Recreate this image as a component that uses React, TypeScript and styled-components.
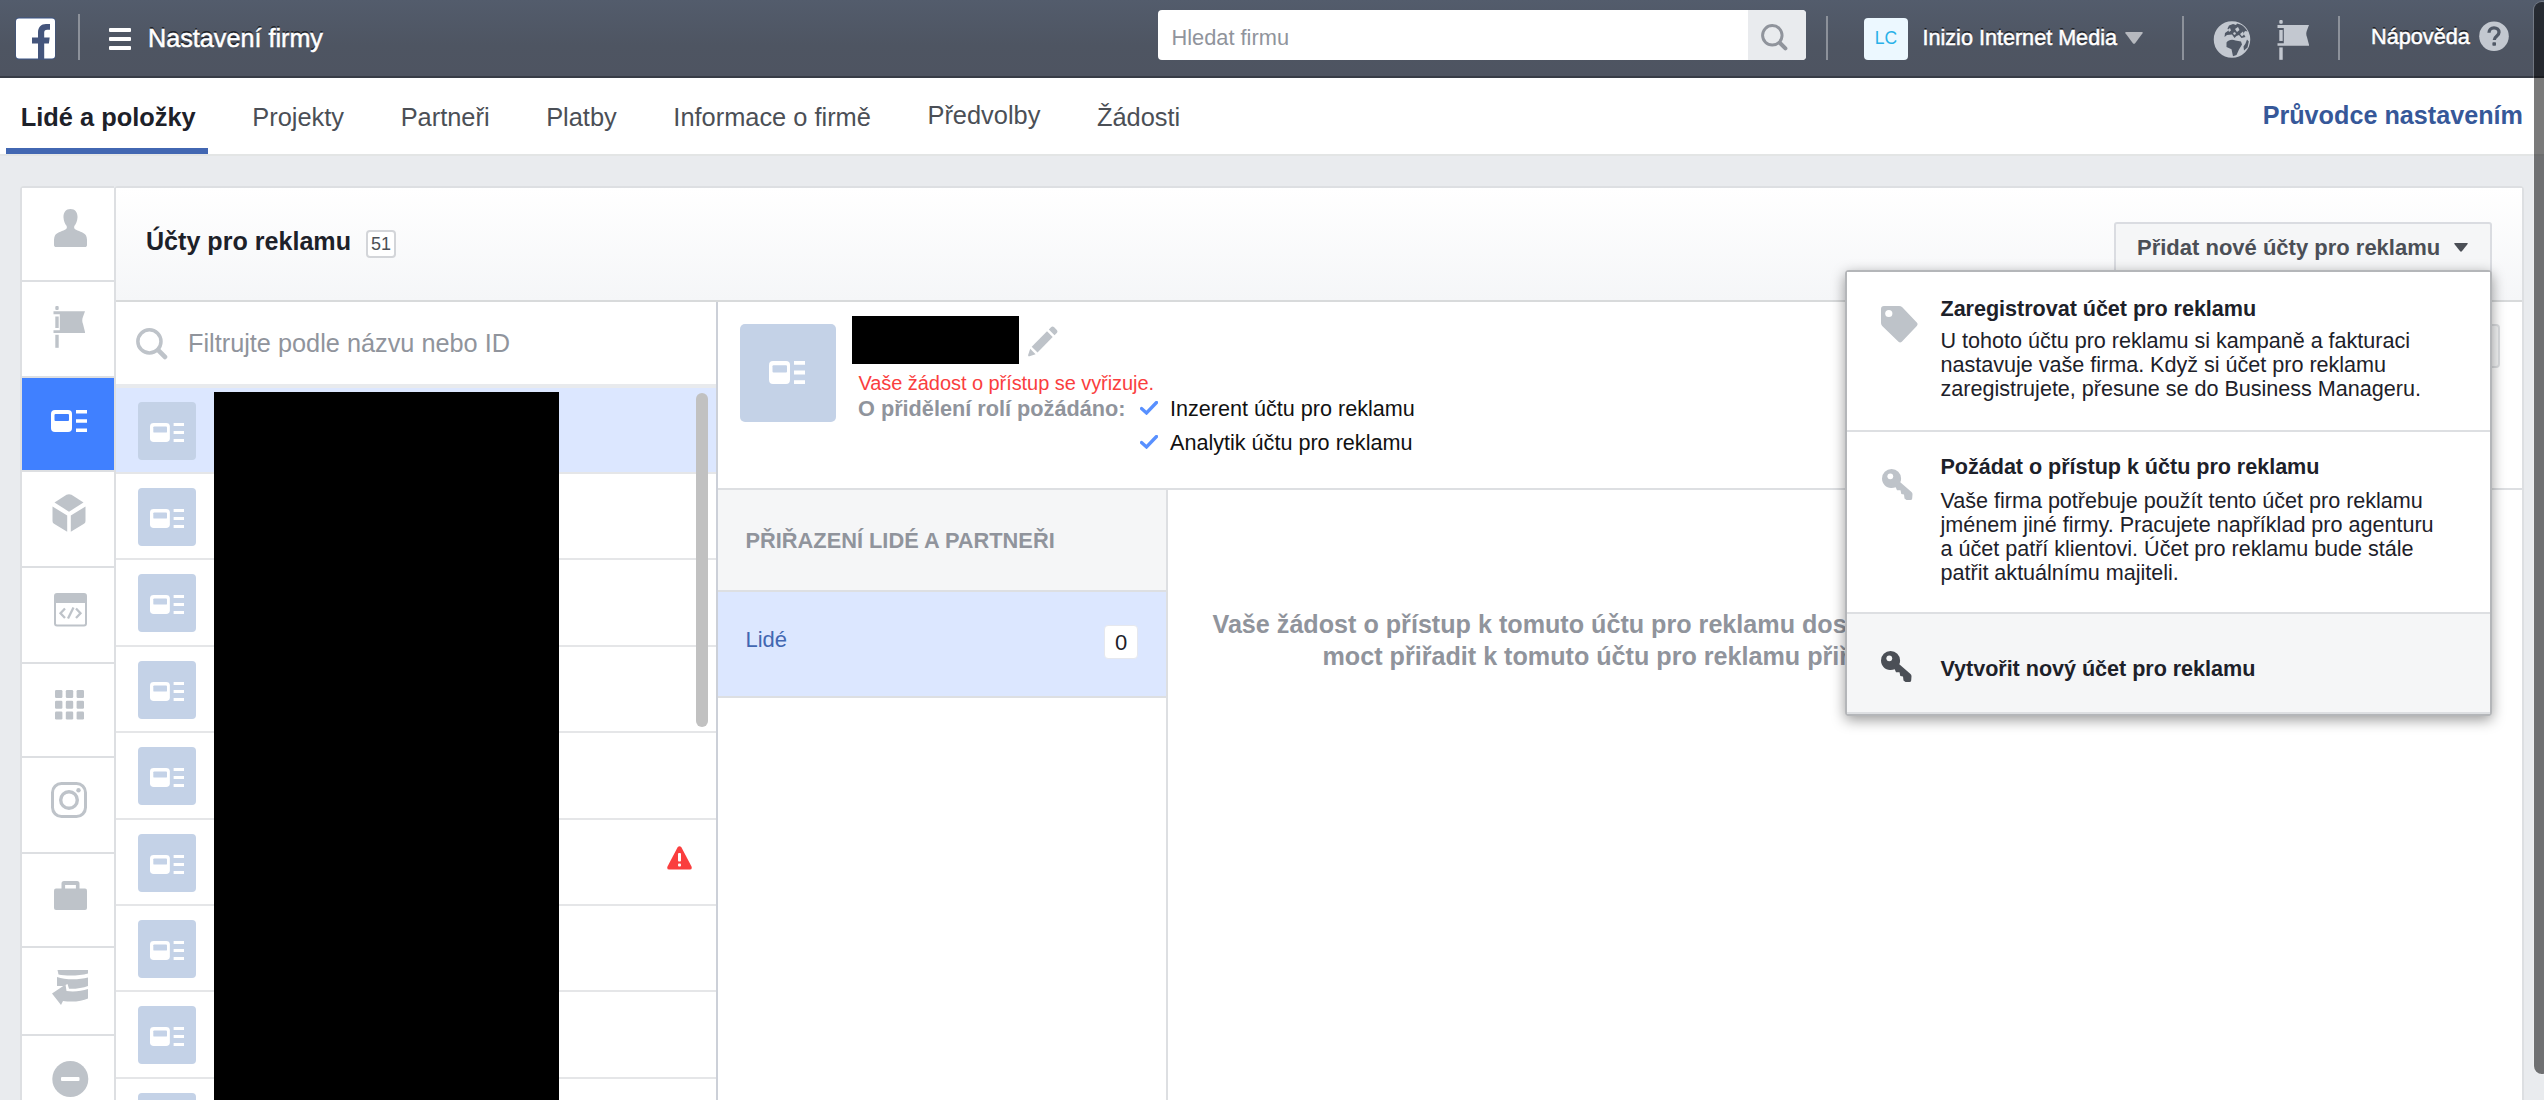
import React from "react";
import styled, { createGlobalStyle } from "styled-components";

const Global = createGlobalStyle`
  html, body { margin: 0; padding: 0; background: #e9ebee; overflow: hidden; }
  * { box-sizing: border-box; }
  body { font-family: "Liberation Sans", Arial, sans-serif; color: #1d2129; }
  svg { display: block; flex: none; }
`;

const GREY = "#bec3c9";

const Page = styled.div`
  position: relative;
  width: 2544px;
  height: 1100px;
  overflow: hidden;
  display: flex;
  flex-direction: column;
`;

/* ---------- top bar ---------- */
const TopBar = styled.header`
  flex: none;
  height: 78px;
  display: flex;
  align-items: flex-start;
  background: linear-gradient(#535c6c, #4e5562 60%, #4e5461);
  border-bottom: 2px solid #373c46;
  padding-left: 15px;
  color: #fff;
`;
const TopSlot = styled.div<{ $top: number; $left: number; $width?: number }>`
  flex: none;
  margin-top: ${(p) => p.$top}px;
  margin-left: ${(p) => p.$left}px;
  ${(p) => p.$width && `width: ${p.$width}px;`}
`;
const TopRule = styled.div<{ $top: number; $left: number }>`
  flex: none;
  width: 2px;
  height: ${(p) => 60 - p.$top}px;
  margin-top: ${(p) => p.$top}px;
  margin-left: ${(p) => p.$left}px;
  background: #8c919a;
`;
const TopText = styled.div<{ $size: number; $top: number; $left: number; $width: number }>`
  flex: none;
  width: ${(p) => p.$width}px;
  margin-left: ${(p) => p.$left}px;
  margin-top: ${(p) => p.$top}px;
  font-size: ${(p) => p.$size}px;
  line-height: 30px;
  white-space: nowrap;
  text-shadow: 0 -2px 0 rgba(0, 0, 0, 0.6);
  -webkit-text-stroke: 0.5px #fff;
`;
const Search = styled.div`
  flex: none;
  display: flex;
  width: 648px;
  height: 50px;
  margin: 10px 0 0 828px;
  border-radius: 4px;
  overflow: hidden;
  background: #fff;
`;
const SearchInput = styled.div`
  flex: 1;
  padding-left: 13.5px;
  padding-top: 13px;
  font-size: 21.8px;
  line-height: 30px;
  color: #90949c;
`;
const SearchButton = styled.div`
  width: 58px;
  background: #e9ebee;
  padding: 14px 0 0 13px;
`;
const Initials = styled.div`
  flex: none;
  width: 44px;
  height: 42px;
  margin: 18px 0 0 36px;
  border-radius: 4px;
  background: #ecf8ff;
  color: #28b1e8;
  font-size: 17.5px;
  line-height: 40px;
  text-align: center;
`;

/* ---------- tabs ---------- */
const Tabs = styled.nav`
  flex: none;
  height: 78px;
  display: flex;
  gap: 30px;
  padding: 0 21px 0 6px;
  background: #fff;
  border-bottom: 2px solid #e3e5e5;
`;
const Tab = styled.div<{ $active?: boolean; $lift?: boolean }>`
  height: 76px;
  padding: ${(p) => (p.$lift ? 17 : 19)}px 11.800px 0 14.800px;
  font-size: 25.4px;
  line-height: 40px;
  white-space: nowrap;
  color: ${(p) => (p.$active ? "#1d2129" : "#4b4f56")};
  font-weight: ${(p) => (p.$active ? "bold" : "normal")};
  border-bottom: 6px solid ${(p) => (p.$active ? "#4267b2" : "transparent")};
`;
const Guide = styled.div`
  margin-left: auto;
  padding-top: 17px;
  font-size: 25.2px;
  line-height: 40px;
  font-weight: bold;
  color: #365899;
`;

/* ---------- body ---------- */
const Body = styled.main`
  flex: 1;
  min-height: 0;
  display: flex;
  padding: 30px 20px 0 20px;
`;
const Rail = styled.div`
  flex: none;
  width: 94px;
  border: 2px solid #dddfe2;
  border-right: 0;
  border-bottom: 0;
  border-top-left-radius: 4px;
  display: flex;
  flex-direction: column;
  background: #fff;
`;
const RailItem = styled.div<{ $h: number; $x: number; $y: number; $active?: boolean }>`
  flex: none;
  height: ${(p) => p.$h}px;
  padding: ${(p) => p.$y}px 0 0 ${(p) => p.$x}px;
  border-bottom: 2px solid #dddfe2;
  background: ${(p) => (p.$active ? "#4080ff" : "#fff")};
`;
const Panel = styled.section`
  flex: none;
  width: 2410px;
  display: flex;
  flex-direction: column;
  background: #fff;
  border: 2px solid #dddfe2;
  border-bottom: 0;
  border-radius: 4px 4px 0 0;
`;
const PanelHeader = styled.div`
  position: relative;
  flex: none;
  height: 114px;
  display: flex;
  background: linear-gradient(#fff, #f5f6f8);
  border-bottom: 2px solid #d8dadb;
  padding: 0 30px 0 30px;
`;
const PanelTitle = styled.h1`
  margin: 33px 0 0;
  font-size: 25.1px;
  line-height: 40px;
  white-space: nowrap;
`;
const Count = styled.div`
  width: 30px;
  height: 28px;
  margin: 42px 0 0 15px;
  border: 2px solid #d3d5d9;
  border-radius: 4px;
  background: #fff;
  color: #4b4f56;
  font-size: 18px;
  line-height: 25px;
  text-align: center;
`;
const AddButton = styled.div`
  width: 378px;
  height: 52px;
  margin: 34px 0 0 auto;
  display: flex;
  justify-content: space-between;
  padding: 9px 22px 0 21px;
  border: 2px solid #dadce1;
  border-radius: 3px;
  background: #f5f6f7;
  color: #4b4f56;
  font-size: 22px;
  font-weight: bold;
  line-height: 30px;
  white-space: nowrap;
`;
const ButtonCaret = styled.div`
  padding-top: 10px;
`;
const Columns = styled.div`
  flex: 1;
  min-height: 0;
  display: flex;
`;

/* ---------- account list ---------- */
const List = styled.div`
  position: relative;
  flex: none;
  width: 602px;
  border-right: 2px solid #ccd0d8;
  overflow: hidden;
`;
const Filter = styled.div`
  height: 85.6px;
  display: flex;
  padding: 26px 0 0 20px;
  gap: 20px;
  border-bottom: 4px solid #e8eaed;
  font-size: 25.3px;
  line-height: 30px;
  color: #90949c;
`;
const Row = styled.div<{ $active?: boolean }>`
  height: 86.4px;
  display: flex;
  justify-content: space-between;
  padding: 14px 24px 0 22px;
  border-bottom: 2px solid #e5e6e8;
  background: ${(p) => (p.$active ? "#dce7ff" : "#fff")};
`;
const Thumb = styled.div`
  width: 58px;
  height: 58px;
  border-radius: 4px;
  background: #c4d2e7;
  padding: 21px 0 0 12px;
`;
const Alert = styled.div`
  padding-top: 12px;
`;
const ListMask = styled.div`
  position: absolute;
  left: 98px;
  top: 89.500px;
  bottom: 0;
  width: 345px;
  background: #000;
`;
const ListScroll = styled.div`
  position: absolute;
  right: 8px;
  top: 91px;
  width: 12px;
  height: 334px;
  border-radius: 6px;
  background: #c1c1c1;
`;

/* ---------- detail ---------- */
const Detail = styled.div`
  flex: 1;
  min-width: 0;
  display: flex;
  flex-direction: column;
`;
const Summary = styled.div`
  flex: none;
  height: 188px;
  display: flex;
  padding: 0 22px 0 22px;
  border-bottom: 2px solid #dddfe2;
`;
const BigThumb = styled.div`
  flex: none;
  width: 96px;
  height: 98px;
  margin-top: 22px;
  border-radius: 5px;
  background: #c4d2e7;
  padding: 37px 0 0 29px;
`;
const Info = styled.div`
  margin-left: 15.500px;
  padding-top: 14px;
`;
const NameLine = styled.div`
  display: flex;
  gap: 9px;
  height: 48px;
`;
const NameMask = styled.div`
  width: 167px;
  height: 48px;
  background: #000;
`;
const Edit = styled.div`
  padding-top: 10px;
`;
const Pending = styled.div`
  margin: 7px 0 0 7px;
  height: 24px;
  font-size: 20px;
  letter-spacing: -0.060px;
  line-height: 24px;
  color: #fa3e3e;
  white-space: nowrap;
`;
const RoleLine = styled.div`
  display: flex;
  margin-left: 6.500px;
  line-height: 34px;
  white-space: nowrap;
`;
const RoleLabel = styled.div`
  width: 282px;
  margin-top: -3px;
  font-size: 21.7px;
  color: #90949c;
  font-weight: bold;
`;
const Roles = styled.div`
  margin-top: -3px;
  font-size: 21.6px;
`;
const Role = styled.div`
  display: flex;
  gap: 12px;
  height: 34.3px;
  color: #111;
`;
const Tick = styled.div`
  padding-top: 9px;
`;
const GhostButton = styled.div`
  width: 110px;
  height: 44px;
  margin: 22px 0 0 auto;
  border: 2px solid #dddfe2;
  border-radius: 4px;
  background: #f5f6f7;
`;
const Lower = styled.div`
  flex: 1;
  display: flex;
`;
const Assigned = styled.div`
  flex: none;
  width: 450px;
  border-right: 2px solid #dddfe2;
`;
const AssignedTitle = styled.div`
  height: 102px;
  padding: 35.500px 0 0 27.500px;
  background: #f5f6f7;
  border-bottom: 2px solid #dddfe2;
  color: #90949c;
  font-size: 21.8px;
  line-height: 30px;
  font-weight: bold;
`;
const AssignedRow = styled.div`
  height: 106px;
  display: flex;
  justify-content: space-between;
  padding: 33px 28px 0 27.500px;
  background: #dce7ff;
  border-bottom: 2px solid #dddfe2;
  color: #4267b2;
  font-size: 22px;
  line-height: 30px;
`;
const Zero = styled.div`
  width: 34px;
  height: 34px;
  border-radius: 4px;
  background: #fff;
  border: 1px solid #e6e8ee;
  color: #1d2129;
  text-align: center;
  line-height: 33px;
`;
const Message = styled.div`
  padding: 118px 0 0 44.500px;
  font-size: 25.150px;
  line-height: 32px;
  font-weight: bold;
  color: #90949c;
  white-space: nowrap;
`;
const MessageLine = styled.div<{ $indent?: number }>`
  margin-left: ${(p) => p.$indent || 0}px;
`;

/* ---------- menu ---------- */
const Menu = styled.div`
  position: absolute;
  right: 30px;
  top: 82px;
  width: 647px;
  height: 446px;
  z-index: 2;
  background: #fff;
  border: 2px solid #b4b6b9;
  border-radius: 4px;
  box-shadow: 0 4px 14px rgba(0, 0, 0, 0.4);
`;
const MenuItem = styled.div<{ $h: number; $top: number; $active?: boolean }>`
  height: ${(p) => p.$h}px;
  display: flex;
  padding-top: ${(p) => p.$top}px;
  border-bottom: 2px solid #dddfe2;
  background: ${(p) => (p.$active ? "#f5f6f7" : "#fff")};
`;
const MenuIcon = styled.div<{ $x: number; $y: number }>`
  flex: none;
  width: 93.500px;
  padding-left: ${(p) => p.$x}px;
  padding-top: ${(p) => p.$y}px;
`;
const MenuTitle = styled.div`
  font-size: 21.6px;
  letter-spacing: -0.040px;
  font-weight: bold;
  line-height: 28px;
`;
const MenuBody = styled.div<{ $gap: number }>`
  margin-top: ${(p) => p.$gap}px;
  font-size: 21.6px;
  letter-spacing: -0.020px;
  line-height: 24px;
  white-space: nowrap;
`;

const PageScroll = styled.div`
  position: absolute;
  right: -6px;
  top: 2px;
  width: 16px;
  height: 1072px;
  border-radius: 8px;
  background: rgba(0, 0, 0, 0.52);
  box-shadow: 0 0 0 1px rgba(255, 255, 255, 0.2);
  z-index: 5;
`;

/* ---------- drawings ---------- */
const AdIcon = ({ w, h, hole }: { w: number; h: number; hole: string }) => (
  <svg width={w} height={h} viewBox="0 0 36 22" preserveAspectRatio="none">
    <rect x="0" y="0" width="21" height="22" rx="4" fill="#fff" />
    <rect x="3.5" y="4" width="14.5" height="7" rx="1" fill={hole} />
    <path d="M25 0h11v3.6H25zM25 9.2h11v3.6H25zM25 18.4h11V22H25z" fill="#fff" />
  </svg>
);
const Flag = ({ w, h, color }: { w: number; h: number; color: string }) => (
  <svg width={w} height={h} viewBox="0 0 33 42" preserveAspectRatio="none" fill={color}>
    <rect x="2.3" y="0" width="3.4" height="4" rx="1" />
    <path d="M0.5 5.2H32l-2 5.5c-1 2.4-1 5 0 7.4l2 7.9v1H0.5v-2.7H6.8V8.3H0.5z" />
    <rect x="2.3" y="10.5" width="3.4" height="11.5" />
    <rect x="2.3" y="28.8" width="3.4" height="13" />
  </svg>
);
const Lens = ({ size, color, sw }: { size: number; color: string; sw: number }) => (
  <svg width={size} height={size} viewBox="0 0 31 31" fill="none" stroke={color}>
    <circle cx="13" cy="13" r="11.2" strokeWidth={sw} />
    <path d="M21.5 21.5L28 28" strokeWidth={sw + 1.2} strokeLinecap="round" />
  </svg>
);
const Caret = ({ w, h, color }: { w: number; h: number; color: string }) => (
  <svg width={w} height={h} viewBox="0 0 16 10" preserveAspectRatio="none">
    <path d="M1 0h14q1.3 0 .6 1L9 9.3q-1 1-2 0L.4 1Q-.3 0 1 0z" fill={color} />
  </svg>
);
const Key = ({ color, hole }: { color: string; hole: string }) => (
  <svg width="31" height="31" viewBox="0 0 31 31">
    <path
      d="M9.500 0A9.500 9.500 0 0 0 0 9.500c0 5.500 4.500 9.800 9.500 9.500 1.500-.1 3-.3 4.200-.8l1.300 3h3.500l.8 3.800 2.700.5.500 4 2 1.500h4q1.500 0 1.700-1.500l.3-4.200q0-1.300-1-2.300L18.300 13.300c.6-1.200.8-2.500.8-3.800A9.500 9.500 0 0 0 9.500 0z"
      fill={color}
    />
    <circle cx="8.300" cy="7.300" r="2.900" fill={hole} />
  </svg>
);
const FacebookLogo = () => (
  <svg width="41" height="43" viewBox="0 0 41 43">
    <rect x="0.500" y="0.500" width="40" height="42" rx="4" fill="#3b5487" />
    <rect x="1" y="1.500" width="39" height="40" rx="3" fill="#fff" />
    <path
      d="M23 42V26.500h-6v-6h6v-4.700C23 9.800 26.200 7 31 7h4v5.700h-2.800c-2.200 0-3 1-3 3v4.800h5.500l-.8 6h-4.700V42z"
      fill="#44557c"
    />
  </svg>
);
const Globe = () => (
  <svg width="38" height="37" viewBox="0 0 38 37">
    <circle cx="19" cy="18.500" r="17" fill="#c3c8d0" stroke="#c3c8d0" strokeWidth="2.500" />
    <g fill="#505866">
      <path d="M16 4.500l4-1.500 3 1 1-1.500c5 .8 8.500 4 10.500 8l-2.500-.5-1.500 2.500 2 3.500-4 1-2.500-3-2.500 1-2 2-2.500-3.500-5 .5-2.500 2 .5-4 3.500-2.500-1-2z" />
      <path d="M13.500 21.500c2-3 6-3.500 9-2l5.500 1 1 3-3 5-2.500 5.500-3.500 1.200-1.500-7-5-2.200z" />
      <path d="M34 18.500l1.800 2-1.300 6-3.500 3-.5-4 2-3z" />
    </g>
    <path d="M22 8l3-2 1.500 3-2.500 2zM27 13l3-2.500 1 3-2 2zM15 8.500l2-1.500 1 2.500-2 1.500zM20 12l2-1 1 2-2 1z" fill="#c3c8d0" />
  </svg>
);

const rail = [
  { h: 94, x: 31.5, y: 21 },
  { h: 96, x: 31, y: 24 },
  { h: 94, x: 29, y: 32, active: true },
  { h: 96, x: 30, y: 22 },
  { h: 96, x: 32, y: 25 },
  { h: 94, x: 33, y: 26 },
  { h: 96, x: 29, y: 24 },
  { h: 94, x: 31.5, y: 27 },
  { h: 88, x: 30, y: 22 },
  { h: 90, x: 29.5, y: 25 },
];

const railIcons = [
  <svg width="33" height="38" viewBox="0 0 33 38" fill={GREY}>
    <path d="M16.500 0c5 0 7.300 4 7 8.500-.2 3.500-1.500 6.500-3 8.300-.8 1.500-.3 3.200 1.500 4 4 1.700 8.500 3.200 10 5.700 1 2 1.300 5.500 1 9.500 0 1.500-1 2-2 2H2c-1 0-2-.5-2-2-.3-4 0-7.500 1-9.500 1.500-2.500 6-4 10-5.700 1.800-.8 2.300-2.500 1.500-4-1.500-1.800-2.800-4.800-3-8.300C9.200 4 11.500 0 16.500 0z" />
  </svg>,
  <Flag w={33} h={42} color={GREY} />,
  <AdIcon w={36} h={22} hole="#4080ff" />,
  <svg width="34" height="38" viewBox="0 0 34 38" fill={GREY}>
    <path d="M14.500 .8q2.500-1.200 5 0L31.500 8.500 17 17.700 2.500 8.500z" />
    <path d="M.5 12.500L15.200 21.500V37.800L2 29.800Q.5 29 .5 27z" />
    <path d="M33.500 12.500L18.800 21.500V37.800L32 29.800Q33.500 29 33.500 27z" />
  </svg>,
  <svg width="33" height="34" viewBox="0 0 33 34" fill="none" stroke={GREY}>
    <rect x="1" y="1" width="31" height="31.500" rx="2" strokeWidth="2" />
    <rect x="1" y="1" width="31" height="9" fill={GREY} stroke="none" />
    <path d="M11 15.500l-4.500 4.700L11 25M22 15.500l4.500 4.700L22 25M19.500 14.500l-5.500 11" strokeWidth="2.300" />
  </svg>,
  <svg width="29" height="30" viewBox="0 0 29 30" fill={GREY}>
    {[0, 10.8, 21.6].map((y) =>
      [0, 10.8, 21.6].map((x) => <rect key={`${x}-${y}`} x={x} y={y} width="7.400" height="7.900" rx="1.200" />)
    )}
  </svg>,
  <svg width="36" height="36" viewBox="0 0 36 36" fill="none" stroke={GREY} strokeWidth="3">
    <rect x="1.500" y="1.500" width="33" height="33" rx="9" />
    <circle cx="18" cy="18" r="8.300" strokeWidth="3.400" />
    <circle cx="27.500" cy="8.200" r="2.200" fill={GREY} stroke="none" />
  </svg>,
  <svg width="33" height="29" viewBox="0 0 33 29" fill={GREY}>
    <path d="M7.500 8V2.500Q7.500 0 10 0h13q2.500 0 2.500 2.500V8h-3.600V4H11.100v4z" />
    <rect x="0" y="7.500" width="33" height="21.500" rx="2" />
  </svg>,
  <svg width="36" height="35" viewBox="0 0 36 35" fill={GREY}>
    <path d="M5.500 0H36v3.500C27 6 14 6 6.500 4.500z" />
    <path d="M5 7c8 3 22 3 31 .5v8.500c-5 2-12 3-19 2.800l-1.500-4.800-4 2L5 16z" />
    <path d="M0 23.500L13.500 14.500l1 6.500c8 1 15 0 21.500-2v9.500c-6 3-16 3.800-25 2.500L9 35z" />
  </svg>,
  <svg width="37" height="37" viewBox="0 0 37 37">
    <circle cx="18.300" cy="18" r="18" fill={GREY} />
    <rect x="9" y="16" width="18.500" height="4" rx="1" fill="#fff" />
  </svg>,
];

export default function App() {
  return (
    <Page>
      <Global />
      <TopBar>
        <TopSlot $top={17} $left={0} $width={41}>
          <FacebookLogo />
        </TopSlot>
        <TopRule $top={14} $left={22} />
        <TopSlot $top={28} $left={29} $width={22}>
          <svg width="22" height="22" viewBox="0 0 22 22" fill="#fff">
            <rect y="0" width="22" height="4" rx="1" />
            <rect y="9" width="22" height="4" rx="1" />
            <rect y="18" width="22" height="4" rx="1" />
          </svg>
        </TopSlot>
        <TopText $size={25.2} $top={23} $left={17} $width={182}>
          Nastavení firmy
        </TopText>
        <Search>
          <SearchInput>Hledat firmu</SearchInput>
          <SearchButton>
            <Lens size={27} color="#90949c" sw={3.4} />
          </SearchButton>
        </Search>
        <TopRule $top={16} $left={20} />
        <Initials>LC</Initials>
        <TopText $size={21.6} $top={23} $left={14.5} $width={202.5}>
          Inizio Internet Media
        </TopText>
        <TopSlot $top={32} $left={0} $width={18}>
          <Caret w={18} h={12} color="#b6b9bf" />
        </TopSlot>
        <TopRule $top={16} $left={39} />
        <TopSlot $top={21} $left={29} $width={38}>
          <Globe />
        </TopSlot>
        <TopSlot $top={20} $left={25.5} $width={33}>
          <Flag w={33} h={40} color="#c3c8d0" />
        </TopSlot>
        <TopRule $top={16} $left={28} />
        <TopText $size={21.7} $top={21.5} $left={31.5} $width={107.5}>
          Nápověda
        </TopText>
        <TopSlot $top={21} $left={0} $width={30}>
          <svg width="30" height="31" viewBox="0 0 30 31">
            <circle cx="15" cy="15.300" r="14.800" fill="#c3c8d0" />
            <path
              d="M10 11.800c0-3.200 2.200-5 5-5s5 1.700 5 4.500c0 4-4.700 4-4.700 7.700"
              fill="none"
              stroke="#505866"
              strokeWidth="3.300"
            />
            <rect x="13.400" y="21.200" width="3.600" height="3.600" rx="0.800" fill="#505866" />
          </svg>
        </TopSlot>
      </TopBar>

      <Tabs>
        <Tab $active>Lidé a položky</Tab>
        <Tab>Projekty</Tab>
        <Tab>Partneři</Tab>
        <Tab>Platby</Tab>
        <Tab>Informace o firmě</Tab>
        <Tab $lift>Předvolby</Tab>
        <Tab>Žádosti</Tab>
        <Guide>Průvodce nastavením</Guide>
      </Tabs>

      <Body>
        <Rail>
          {rail.map((r, i) => (
            <RailItem key={i} $h={r.h} $x={r.x} $y={r.y} $active={r.active}>
              {railIcons[i]}
            </RailItem>
          ))}
        </Rail>
        <Panel>
          <PanelHeader>
            <PanelTitle>Účty pro reklamu</PanelTitle>
            <Count>51</Count>
            <AddButton>
              Přidat nové účty pro reklamu
              <ButtonCaret>
                <Caret w={14} h={9} color="#4b4f56" />
              </ButtonCaret>
            </AddButton>
            <Menu>
              <MenuItem $h={160} $top={23}>
                <MenuIcon $x={33.5} $y={11}>
                  <svg width="37" height="37" viewBox="0 0 37 37">
                    <path
                      d="M3 0h15q2 0 3.300 1.300L35.800 16.500q1.500 1.700 0 3.400L20.800 35.700q-1.700 1.600-3.300 0L1.200 20Q0 18.700 0 17V3Q0 0 3 0z"
                      fill={GREY}
                    />
                    <circle cx="7.800" cy="7.500" r="3.600" fill="#fff" />
                  </svg>
                </MenuIcon>
                <div>
                  <MenuTitle>Zaregistrovat účet pro reklamu</MenuTitle>
                  <MenuBody $gap={6}>
                    U tohoto účtu pro reklamu si kampaně a fakturaci
                    <br />
                    nastavuje vaše firma. Když si účet pro reklamu
                    <br />
                    zaregistrujete, přesune se do Business Manageru.
                  </MenuBody>
                </div>
              </MenuItem>
              <MenuItem $h={182} $top={21}>
                <MenuIcon $x={35} $y={16}>
                  <Key color={GREY} hole="#fff" />
                </MenuIcon>
                <div>
                  <MenuTitle>Požádat o přístup k účtu pro reklamu</MenuTitle>
                  <MenuBody $gap={8}>
                    Vaše firma potřebuje použít tento účet pro reklamu
                    <br />
                    jménem jiné firmy. Pracujete například pro agenturu
                    <br />a účet patří klientovi. Účet pro reklamu bude stále
                    <br />
                    patřit aktuálnímu majiteli.
                  </MenuBody>
                </div>
              </MenuItem>
              <MenuItem $h={100} $top={37} $active>
                <MenuIcon $x={34} $y={0}>
                  <Key color="#4b4f56" hole="#f5f6f7" />
                </MenuIcon>
                <MenuBody $gap={4}>
                  <MenuTitle>Vytvořit nový účet pro reklamu</MenuTitle>
                </MenuBody>
              </MenuItem>
            </Menu>
          </PanelHeader>

          <Columns>
            <List>
              <Filter>
                <Lens size={32} color={GREY} sw={3.4} />
                <div>Filtrujte podle názvu nebo ID</div>
              </Filter>
              {Array.from({ length: 9 }, (_, i) => (
                <Row key={i} $active={i === 0}>
                  <Thumb>
                    <AdIcon w={34} h={19} hole="#c4d2e7" />
                  </Thumb>
                  {i === 5 && (
                    <Alert>
                      <svg width="25" height="24" viewBox="0 0 25 24">
                        <path d="M10.500 1.500q2-2.500 4 0l10 19q1 3-1.700 3H2.200q-2.700 0-1.700-3z" fill="#fa3e3e" />
                        <rect x="11" y="7" width="3" height="8.500" rx="1" fill="#fff" />
                        <rect x="11" y="17.500" width="3" height="3" rx="1" fill="#fff" />
                      </svg>
                    </Alert>
                  )}
                </Row>
              ))}
              <ListMask />
              <ListScroll />
            </List>

            <Detail>
              <Summary>
                <BigThumb>
                  <AdIcon w={36} h={23} hole="#c4d2e7" />
                </BigThumb>
                <Info>
                  <NameLine>
                    <NameMask />
                    <Edit>
                      <svg width="30" height="31" viewBox="0 0 30 31" fill={GREY}>
                        <path d="M23 1.200q1.500-1.500 3.200 0l2.600 2.800q1.300 1.600 0 3L26.500 9.200 20.800 3.400z" />
                        <path d="M19 5.200l5.700 5.800L9.500 26.500 3.700 20.700z" />
                        <path d="M2.200 22.700l5.400 5.500L1.500 30.300Q-.2 30.500.2 28.800z" />
                      </svg>
                    </Edit>
                  </NameLine>
                  <Pending>Vaše žádost o přístup se vyřizuje.</Pending>
                  <RoleLine>
                    <RoleLabel>O přidělení rolí požádáno:</RoleLabel>
                    <Roles>
                      {["Inzerent účtu pro reklamu", "Analytik účtu pro reklamu"].map((r) => (
                        <Role key={r}>
                          <Tick>
                            <svg width="18" height="14" viewBox="0 0 18 14" fill="none">
                              <path d="M1.500 7.500l5 4.500L16.500 1.500" stroke="#5890ff" strokeWidth="3.300" strokeLinecap="round" />
                            </svg>
                          </Tick>
                          {r}
                        </Role>
                      ))}
                    </Roles>
                  </RoleLine>
                </Info>
                <GhostButton />
              </Summary>
              <Lower>
                <Assigned>
                  <AssignedTitle>PŘIŘAZENÍ LIDÉ A PARTNEŘI</AssignedTitle>
                  <AssignedRow>
                    <div>Lidé</div>
                    <Zero>0</Zero>
                  </AssignedRow>
                </Assigned>
                <Message>
                  <MessageLine>Vaše žádost o přístup k tomuto účtu pro reklamu dos</MessageLine>
                  <MessageLine $indent={110}>moct přiřadit k tomuto účtu pro reklamu přiř</MessageLine>
                </Message>
              </Lower>
            </Detail>
          </Columns>
        </Panel>
      </Body>
      <PageScroll />
    </Page>
  );
}
